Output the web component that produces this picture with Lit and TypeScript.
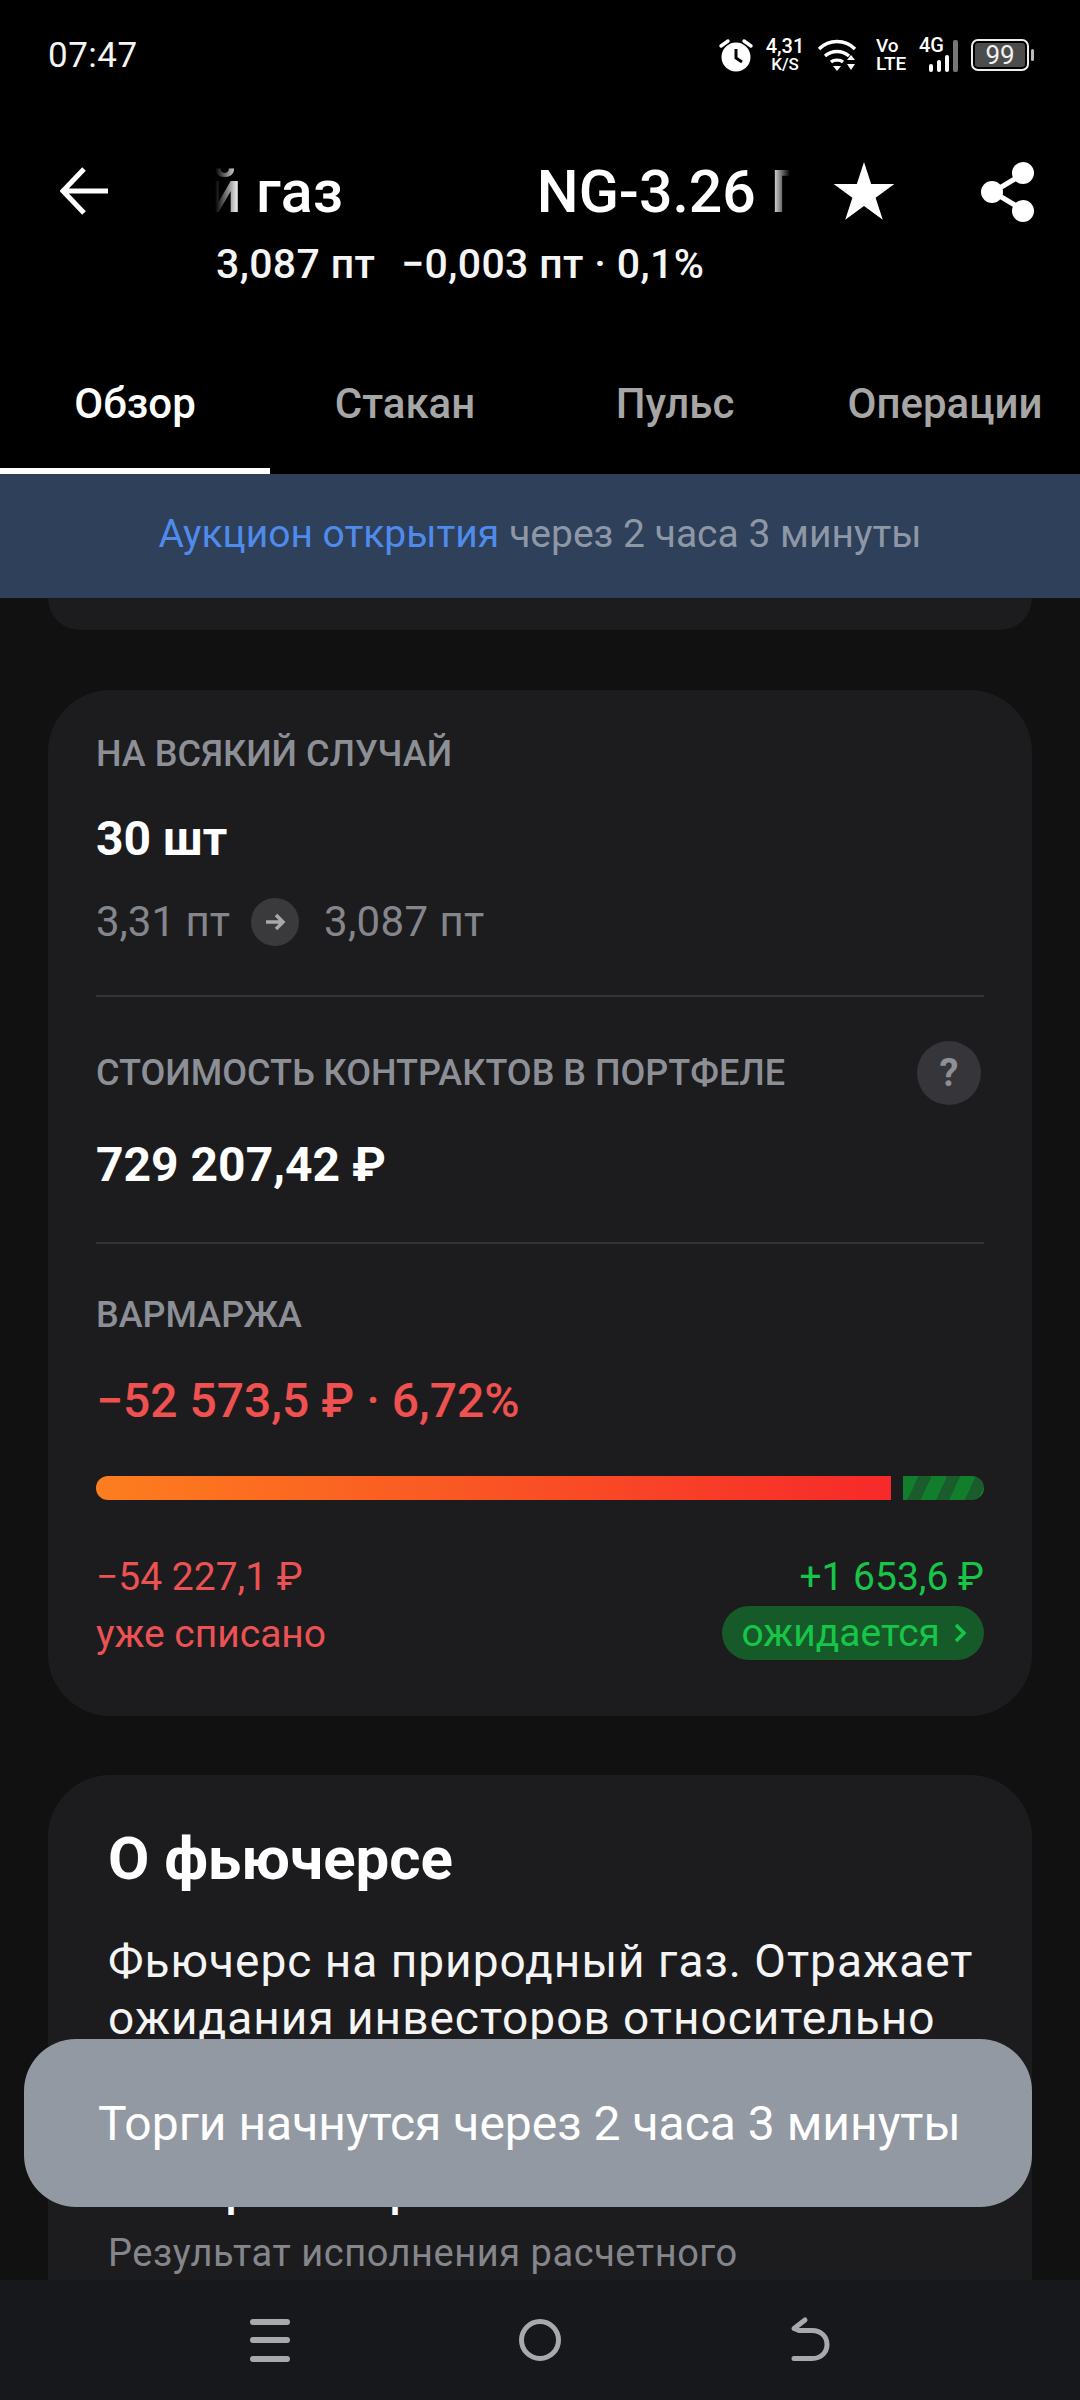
import { LitElement, html, css } from "lit";
import { customElement } from "lit/decorators.js";

@customElement("app-root")
export class AppRoot extends LitElement {
  static styles = css`
    :host { display: block; width: 1080px; height: 2400px; position: relative; overflow: hidden; background: #111112; font-family: Roboto, "Noto Sans", sans-serif; color: #fff; }
    .page { height: 2400px; display: flex; flex-direction: column; }
    .top { background: #000; flex: none; }
    .status { height: 108px; display: flex; align-items: center; padding: 2px 48px 0; box-sizing: border-box; }
    .time { font-size: 35px; color: #f4f4f4; letter-spacing: .5px; }
    .icons { margin-left: auto; display: flex; align-items: center; margin-right: -2px; }
    .alarm { width: 36px; height: 36px; margin-right: 12px; }
    .speed { width: 38px; display: flex; flex-direction: column; align-items: center; margin-right: 13px; font-weight: 500; line-height: 1; }
    .speed b { font-weight: 500; font-size: 20px; line-height: 19px; }
    .speed i { font-style: normal; font-size: 17px; line-height: 17px; }
    .wifi { width: 40px; height: 36px; margin-right: 19px; }
    .vo { width: 34px; display: flex; flex-direction: column; font-weight: 500; line-height: 1; margin-right: 9px; }
    .vo b { font-weight: 500; font-size: 19px; line-height: 18px; }
    .vo i { font-style: normal; font-size: 19px; line-height: 18px; }
    .sig { width: 44px; height: 36px; position: relative; margin-right: 8px; }
    .sig svg { width: 44px; height: 36px; display: block; }
    .sig span { position: absolute; left: 0; top: -1px; font-size: 20px; line-height: 19px; font-weight: 500; }
    .batt { width: 63px; height: 32px; display: block; }
    .batt-wrap { position: relative; width: 63px; height: 32px; }
    .batt-wrap span { position: absolute; left: 4px; top: 3px; width: 50px; height: 26px; line-height: 27px; text-align: center; font-size: 26px; color: #f0f0f0; }
    .head { height: 168px; display: flex; padding-left: 60px; padding-right: 45px; box-sizing: border-box; }
    .back { width: 48px; height: 48px; margin-top: 59px; flex: none; }
    .titles { width: 575px; margin-left: 107px; flex: none; margin-top: 51px; }
    .marq { width: 575px; overflow: hidden; white-space: nowrap; font-size: 59px; line-height: 66px; font-weight: 500; display: flex; gap: 194px; -webkit-mask-image: linear-gradient(90deg, transparent 0, #000 24px, #000 556px, transparent 575px); mask-image: linear-gradient(90deg, transparent 0, #000 24px, #000 556px, transparent 575px); }
    .marq span { flex: none; }
    .marq .off { margin-left: -298px; }
    .sub { font-size: 41px; font-weight: 500; line-height: 44px; margin-top: 17px; margin-left: 1px; display: flex; gap: 26px; color: #f5f5f5; letter-spacing: .35px; }
    .star { width: 62px; height: 60px; margin-left: 43px; margin-top: 53px; flex: none; }
    .share { width: 54px; height: 60px; margin-left: auto; margin-top: 54px; flex: none; }
    .tabs { height: 198px; display: grid; grid-template-columns: repeat(4, 270px); }
    .tab { display: flex; align-items: flex-start; justify-content: center; padding-top: 105px; font-size: 42px; line-height: 46px; font-weight: 500; color: #a6a6a6; box-sizing: border-box; height: 198px; }
    .tab.on { color: #fff; border-bottom: 6px solid #fff; }
    .banner { background: #2e405a; height: 124px; box-sizing: border-box; padding-bottom: 4px; flex: none; display: flex; align-items: center; justify-content: center; font-size: 39px; color: #8d97a6; gap: 10px; z-index: 1; }
    .banner em { font-style: normal; color: #4e8bec; }
    .scroll { flex: 1; min-height: 0; overflow: hidden; padding: 0 48px; display: flex; flex-direction: column; gap: 60px; }
    .card { background: #1c1c1e; border-radius: 62px; flex: none; }
    .stub { height: 32px; border-radius: 0 0 62px 62px; }
    .main { padding: 41px 48px 0; height: 1026px; box-sizing: border-box; margin-bottom: -1px; }
    .lab { font-size: 36px; font-weight: 500; color: #8d8f97; line-height: 46px; }
    .big { font-size: 48px; font-weight: 700; line-height: 56px; margin-top: 34px; }
    .route { display: flex; align-items: center; font-size: 42px; color: #84868c; margin-top: 30px; line-height: 50px; }
    .route span:last-child { letter-spacing: .4px; }
    .dot { width: 48px; height: 48px; border-radius: 50%; background: #3a3a3d; margin: 0 25px 0 21px; display: flex; align-items: center; justify-content: center; }
    .dot svg { width: 24px; height: 24px; }
    hr { border: 0; height: 2px; background: #333336; margin: 0; }
    .h1 { margin-top: 48px; }
    .row { display: flex; align-items: center; justify-content: space-between; margin-top: 44px; height: 64px; }
    .q { width: 64px; height: 64px; border-radius: 50%; background: #35353a; color: #8f9097; font-weight: 700; font-size: 38px; display: flex; align-items: center; justify-content: center; margin-right: 3px; }
    .val { margin-top: 32px; }
    .h2 { margin-top: 49px; }
    .var { margin-top: 48px; }
    .loss { font-size: 48px; font-weight: 500; color: #ef5050; line-height: 56px; margin-top: 35px; }
    .bar { display: flex; gap: 12px; height: 24px; margin-top: 47px; }
    .bar .r { width: 795px; border-radius: 12px 0 0 12px; background: linear-gradient(90deg, #fd7e1e, #f6292a); }
    .bar .g { flex: 1; border-radius: 0 12px 12px 0; background: repeating-linear-gradient(115deg, #117e2e 0 14px, #1a5c2b 14px 26px); }
    .legs { display: flex; justify-content: space-between; margin-top: 52px; }
    .leg { display: flex; flex-direction: column; }
    .leg.red { color: #ec5254; }
    .leg.grn { color: #17c548; align-items: flex-end; }
    .amt { font-size: 39px; line-height: 50px; }
    .note { font-size: 39px; line-height: 50px; margin-top: 7px; }
    .pill { background: #175a2a; border-radius: 27px; height: 54px; font-size: 39px; display: flex; align-items: center; gap: 13px; padding: 0 17px 0 19px; margin-top: 4px; }
    .pill svg { width: 14px; height: 22px; }
    .about { padding: 51px 30px 0 60px; height: 600px; box-sizing: border-box; }
    .about h2 { margin: 0; font-size: 60px; line-height: 66px; font-weight: 700; }
    .about p { margin: 41px 0 0; font-size: 46px; line-height: 57px; color: #f4f4f4; letter-spacing: 1px; }
    .about .more { visibility: hidden; margin-top: 0; }
    .about h3 { margin: 58px 0 0; font-weight: 500; font-size: 46px; line-height: 56px; }
    .about .mut { font-size: 38px; line-height: 46px; color: #85868c; margin-top: 12px; letter-spacing: .55px; }
    .nav { flex: none; height: 120px; background: #16181c; display: grid; grid-template-columns: repeat(3, 270px); padding: 0 135px; z-index: 1; }
    .nav div { display: flex; align-items: center; justify-content: center; }
    .nav svg { width: 48px; height: 48px; display: block; }
    .toast { position: absolute; z-index: 2; left: 24px; top: 2039px; width: 1008px; height: 168px; border-radius: 52px; background: #9299a3; display: flex; align-items: center; padding-left: 74px; box-sizing: border-box; font-size: 48px; color: #fff; }
  `;

  render() {
    return html`
      <div class="page">
        <div class="top">
          <div class="status">
            <span class="time">07:47</span>
            <div class="icons">
              <svg class="alarm" viewBox="0 0 36 36" aria-hidden="true">
                <circle cx="18" cy="20" r="14.5" fill="#fff"/>
                <path d="M18 12v9l6 4" fill="none" stroke="#000" stroke-width="3"/>
                <path d="M3 9l7-5M33 9l-7-5" stroke="#fff" stroke-width="3.4" stroke-linecap="round"/>
              </svg>
              <div class="speed"><b>4,31</b><i>K/S</i></div>
              <svg class="wifi" viewBox="0 0 40 36" fill="none" stroke="#fff" stroke-width="3.4" aria-hidden="true">
                <path d="M2 12C12 2 28 2 38 12"/>
                <path d="M8 19c7-6 17-6 24 0"/>
                <path d="M14 25c3-2.500 9-2.500 12 0"/>
                <path d="M16 29h8l-4 5z" fill="#fff" stroke="none"/>
                <path d="M30 23l4-5 4 5zM30 27h8l-4 6z" fill="#fff" stroke="none"/>
              </svg>
              <div class="vo"><b>Vo</b><i>LTE</i></div>
              <div class="sig">
                <span>4G</span>
                <svg viewBox="0 0 44 36" aria-hidden="true">
                  <rect x="10" y="27" width="4" height="8" rx="2" fill="#fff"/>
                  <rect x="18" y="23" width="4" height="12" rx="2" fill="#fff"/>
                  <rect x="26" y="18" width="4" height="17" rx="2" fill="#fff"/>
                  <rect x="34" y="3" width="5" height="32" rx="2" fill="#777"/>
                </svg>
              </div>
              <div class="batt-wrap">
                <svg class="batt" viewBox="0 0 63 32" aria-hidden="true">
                  <rect x="1" y="1" width="56" height="30" rx="6" fill="none" stroke="#eee" stroke-width="2"/>
                  <rect x="4" y="4" width="50" height="24" rx="3" fill="#4c4c4c"/>
                  <rect x="60" y="10" width="3" height="12" rx="1.500" fill="#bbb"/>
                </svg>
                <span>99</span>
              </div>
            </div>
          </div>
          <div class="head">
            <svg class="back" viewBox="0 0 48 48" fill="none" stroke="#fff" stroke-width="5" aria-hidden="true">
              <path d="M24 2L3 24l21 22M3 24h45"/>
            </svg>
            <div class="titles">
              <div class="marq">
                <span class="off">Природный газ</span>
                <span>NG-3.26 Природный газ</span>
              </div>
              <div class="sub"><span>3,087 пт</span><span>−0,003 пт · 0,1%</span></div>
            </div>
            <svg class="star" viewBox="0 0 64 62" aria-hidden="true">
              <path d="M32 1l7.400 22.800h24L44 37.900l7.400 22.800L32 46.600 12.600 60.700 20 37.900 .6 23.800h24z" fill="#fff"/>
            </svg>
            <svg class="share" viewBox="0 0 54 60" aria-hidden="true">
              <path d="M42 12L12 30l30 18" fill="none" stroke="#fff" stroke-width="5"/>
              <circle cx="42" cy="11" r="11" fill="#fff"/><circle cx="11" cy="30" r="11" fill="#fff"/><circle cx="42" cy="49" r="11" fill="#fff"/>
            </svg>
          </div>
          <div class="tabs">
            <div class="tab on">Обзор</div>
            <div class="tab">Стакан</div>
            <div class="tab">Пульс</div>
            <div class="tab">Операции</div>
          </div>
        </div>
        <div class="banner"><em>Аукцион открытия</em> через 2 часа 3 минуты</div>
        <div class="scroll">
          <div class="card stub"></div>
          <div class="card main">
            <div class="lab">НА ВСЯКИЙ СЛУЧАЙ</div>
            <div class="big">30 шт</div>
            <div class="route">
              <span>3,31 пт</span>
              <span class="dot"><svg viewBox="0 0 24 24" fill="none" stroke="#a8a8ab" stroke-width="3.500" aria-hidden="true"><path d="M3 12h17M13 5l7 7-7 7"/></svg></span>
              <span>3,087 пт</span>
            </div>
            <hr class="h1" />
            <div class="row"><span class="lab">СТОИМОСТЬ КОНТРАКТОВ В ПОРТФЕЛЕ</span><span class="q">?</span></div>
            <div class="big val">729 207,42 ₽</div>
            <hr class="h2" />
            <div class="lab var">ВАРМАРЖА</div>
            <div class="loss">−52 573,5 ₽ · 6,72%</div>
            <div class="bar"><div class="r"></div><div class="g"></div></div>
            <div class="legs">
              <div class="leg red"><span class="amt">−54 227,1 ₽</span><span class="note">уже списано</span></div>
              <div class="leg grn"><span class="amt">+1 653,6 ₽</span>
                <span class="pill">ожидается <svg viewBox="0 0 14 22" fill="none" stroke="#17c548" stroke-width="3.500" aria-hidden="true"><path d="M3 3l8 8-8 8"/></svg></span>
              </div>
            </div>
          </div>
          <div class="card about">
            <h2>О фьючерсе</h2>
            <p>Фьючерс на природный газ. Отражает ожидания инвесторов относительно</p>
            <p class="more">будущей цены</p>
            <h3>Что при отборе</h3>
            <div class="mut">Результат исполнения расчетного</div>
          </div>
        </div>
        <div class="nav">
          <div><svg viewBox="0 0 48 48" fill="none" stroke="#a9a9ab" stroke-width="6" stroke-linecap="round" aria-hidden="true"><path d="M7 6h34M7 24h34M7 43h34"/></svg></div>
          <div><svg viewBox="0 0 48 48" fill="none" stroke="#a9a9ab" stroke-width="5" aria-hidden="true"><circle cx="24" cy="24" r="18.500"/></svg></div>
          <div><svg viewBox="0 0 48 48" fill="none" stroke="#a9a9ab" stroke-width="5" stroke-linecap="round" stroke-linejoin="round" aria-hidden="true"><path d="M19 4L8 12.500l5 2h13c20 0 20 28 0 28H8"/></svg></div>
        </div>
      </div>
      <div class="toast">Торги начнутся через 2 часа 3 минуты</div>
    `;
  }
}
